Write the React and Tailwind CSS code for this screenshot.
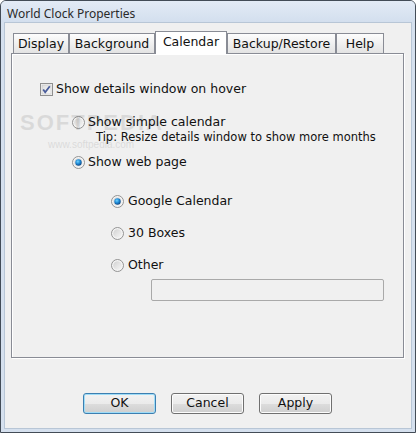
import React from "react";

const F = { fontFamily: '"DejaVu Sans", Verdana, sans-serif' };

function CheckBox() {
  return (
    <svg width="13" height="13" viewBox="0 0 13 13" className="shrink-0">
      <defs>
        <linearGradient id="cbg" x1="0" y1="0" x2="1" y2="1">
          <stop offset="0" stopColor="#dcdcdc" />
          <stop offset="1" stopColor="#fbfbfb" />
        </linearGradient>
      </defs>
      <rect x="0.5" y="0.5" width="12" height="12" fill="#f4f4f4" stroke="#8f8f8f" />
      <rect x="2" y="2" width="9" height="9" fill="url(#cbg)" stroke="#c6c6c6" strokeWidth="0.6" />
      <path d="M3.2 6.4 L5.2 9.2 L9.8 3.2" fill="none" stroke="#4a5d9b" strokeWidth="1.8" />
    </svg>
  );
}

function Radio({ on }) {
  const id = on ? "ron" : "roff";
  return (
    <svg width="13" height="13" viewBox="0 0 13 13" className="shrink-0">
      <defs>
        <linearGradient id={id + "o"} x1="0" y1="0" x2="1" y2="1">
          <stop offset="0" stopColor="#d2d2d2" />
          <stop offset="1" stopColor="#f6f6f6" />
        </linearGradient>
        <radialGradient id={id + "d"} cx="0.4" cy="0.35" r="0.7">
          <stop offset="0" stopColor="#6fd3ff" />
          <stop offset="0.5" stopColor="#1f8ad6" />
          <stop offset="1" stopColor="#0b3f7a" />
        </radialGradient>
      </defs>
      <circle cx="6.5" cy="6.5" r="6" fill="#f4f4f4" stroke="#939393" />
      <circle cx="6.5" cy="6.5" r="4.3" fill={`url(#${id}o)`} />
      {on && <circle cx="6.5" cy="6.5" r="3.2" fill={`url(#${id}d)`} />}
    </svg>
  );
}

function Tab({ label, w, selected }) {
  if (selected) {
    return (
      <div
        className={`${w} h-[23px] -mb-px relative z-10 flex items-center justify-center border border-b-0 border-[#898c95] bg-white text-[12.5px] text-[#111] pb-[2px]`}
      >
        {label}
      </div>
    );
  }
  return (
    <div
      className={`${w} h-[20px] flex items-center justify-center border border-b-0 border-[#898c95] bg-gradient-to-b from-[#fdfdfd] to-[#e3e3e3] text-[12.5px] text-[#111] pt-[1px]`}
    >
      {label}
    </div>
  );
}

function Btn({ label, def }) {
  return (
    <div
      className={`w-[73px] h-[21px] rounded-[3px] border flex items-center justify-center text-[12.5px] text-[#111] ${
        def
          ? "border-[#3c7fb1] shadow-[inset_0_0_0_1px_#9fdcf7]"
          : "border-[#707070] shadow-[inset_0_0_0_1px_#fcfcfc]"
      } bg-[linear-gradient(#f2f2f2_0%,#ebebeb_50%,#dddddd_51%,#cfcfcf_100%)]`}
    >
      {label}
    </div>
  );
}

export default function App() {
  return (
    <div className="w-[416px] h-[433px] bg-white">
      <div className="w-[416px] h-[433px] rounded-t-[6px] border border-[#434c57] bg-[#d5e0ee] flex flex-col overflow-hidden">
        <div
          className="h-[21px] shrink-0 flex items-center pl-[6px] pt-[4px] bg-gradient-to-b from-[#e3ebf6] to-[#d3dfee] text-[12px] text-[#2a2a2a]"
          style={{ fontFamily: '"Noto Sans", "Liberation Sans", sans-serif' }}
        >
          World Clock Properties
        </div>
        <div className="flex-1 mx-[3px] mb-[3px] border border-[#b8c6d6] bg-[#f0f0f0] px-[6px] pt-[8px] flex flex-col relative" style={F}>
          <div className="flex items-end h-[22px] pl-[2px]">
            <Tab label="Display" w="w-[56px]" />
            <Tab label="Background" w="w-[86px]" />
            <Tab label="Calendar" w="w-[72px]" selected />
            <Tab label="Backup/Restore" w="w-[109px]" />
            <Tab label="Help" w="w-[48px]" />
          </div>
          <div className="h-[305px] w-[393px] border border-[#898c95] shadow-[inset_1px_1px_0_#ffffff,1px_1px_0_#ffffff] bg-[#f0f0f0] flex flex-col pl-[28px] text-[12.5px] text-[#111] relative">
            <div className="mt-[27px] h-[16px] flex items-center gap-[3px]">
              <CheckBox />
              <span>Show details window on hover</span>
            </div>
            <div className="mt-[17px] h-[16px] flex items-center gap-[3px] pl-[32px]">
              <Radio />
              <span>Show simple calendar</span>
            </div>
            <div className="h-[16px] flex items-center pl-[56px] text-[11.5px]">
              Tip: Resize details window to show more months
            </div>
            <div className="mt-[8px] h-[16px] flex items-center gap-[3px] pl-[32px]">
              <Radio on />
              <span>Show web page</span>
            </div>
            <div className="mt-[23px] h-[16px] flex items-center gap-[4px] pl-[71px]">
              <Radio on />
              <span>Google Calendar</span>
            </div>
            <div className="mt-[16px] h-[16px] flex items-center gap-[4px] pl-[71px]">
              <Radio />
              <span>30 Boxes</span>
            </div>
            <div className="mt-[16px] h-[16px] flex items-center gap-[4px] pl-[71px]">
              <Radio />
              <span>Other</span>
            </div>
            <div className="mt-[6px] ml-[111px] w-[233px] h-[22px] border border-[#a9a9a9] rounded-[2px] bg-[#f0f0f0]" />
            <div className="absolute left-[8px] top-[58px] pointer-events-none opacity-[0.09] text-[#000] leading-none">
              <div className="text-[22px] font-bold tracking-[2px]" style={{ fontFamily: '"Liberation Sans", sans-serif' }}>SOFTPEDIA</div>
              <div className="text-[10px] mt-[6px] ml-[28px]" style={{ fontFamily: '"Liberation Sans", sans-serif' }}>www.softpedia.com</div>
            </div>
          </div>
          <div className="mt-[35px] flex justify-center gap-[15px] pr-[1px]">
            <Btn label="OK" def />
            <Btn label="Cancel" />
            <Btn label="Apply" />
          </div>
        </div>
      </div>
    </div>
  );
}
